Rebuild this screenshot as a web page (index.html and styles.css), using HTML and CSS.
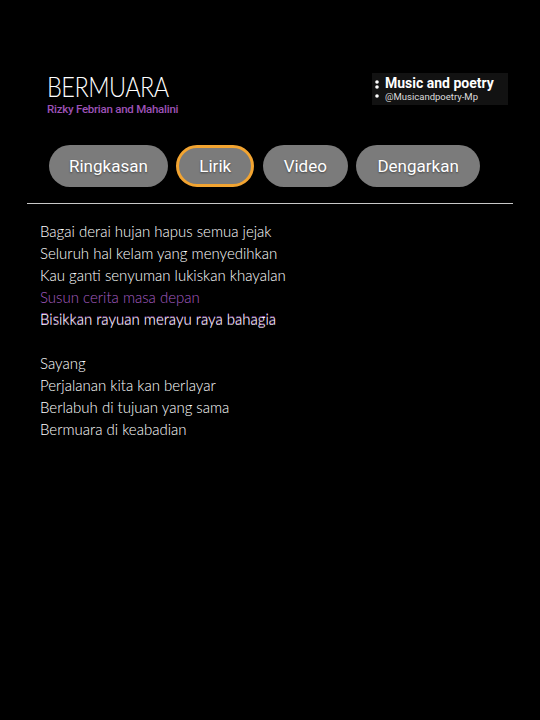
FILE: index.html
```html
<!DOCTYPE html>
<html>
<head>
<meta charset="utf-8">
<link rel="stylesheet" href="styles.css">
</head>
<body>
<div class="page">
  <div class="header">
    <div class="song">
      <div class="title">BERMUARA</div>
      <div class="artist">Rizky Febrian and Mahalini</div>
    </div>
    <div class="channel">
      <svg class="dots" width="6" height="20" viewBox="0 0 6 20">
        <circle cx="3" cy="2" r="1.8" fill="#fff"/>
        <circle cx="3" cy="7" r="1.8" fill="#fff"/>
        <circle cx="3" cy="16" r="1.8" fill="#fff"/>
      </svg>
      <div class="channel-text">
        <div class="channel-name">Music and poetry</div>
        <div class="channel-handle">@Musicandpoetry-Mp</div>
      </div>
    </div>
  </div>
  <div class="tabs">
    <div class="tab">Ringkasan</div>
    <div class="tab active">Lirik</div>
    <div class="tab">Video</div>
    <div class="tab">Dengarkan</div>
  </div>
  <div class="divider"></div>
  <div class="lyrics">
    <div class="line">Bagai derai hujan hapus semua jejak</div>
    <div class="line">Seluruh hal kelam yang menyedihkan</div>
    <div class="line">Kau ganti senyuman lukiskan khayalan</div>
    <div class="line current">Susun cerita masa depan</div>
    <div class="line next">Bisikkan rayuan merayu raya bahagia</div>
    <div class="line blank">&nbsp;</div>
    <div class="line">Sayang</div>
    <div class="line">Perjalanan kita kan berlayar</div>
    <div class="line">Berlabuh di tujuan yang sama</div>
    <div class="line">Bermuara di keabadian</div>
  </div>
</div>
</body>
</html>
```
FILE: styles.css
```css
html, body {
  margin: 0;
  padding: 0;
  background: #000;
}
.page {
  width: 540px;
  height: 720px;
  background: #000;
  color: #fff;
  font-family: Roboto, "Liberation Sans", sans-serif;
}
.header {
  display: flex;
  justify-content: space-between;
  align-items: flex-start;
  padding: 72px 32px 0 47px;
}
.title {
  font-family: Lato, "DejaVu Sans", sans-serif;
  font-weight: 300;
  font-size: 27px;
  line-height: 30px;
  letter-spacing: -0.6px;
  color: #fff;
  transform: scaleX(0.87);
  transform-origin: left center;
}
.artist {
  font-family: Roboto, sans-serif;
  font-weight: 500;
  font-size: 11.5px;
  line-height: 14px;
  letter-spacing: -0.25px;
  color: #9d52b6;
  margin-top: 0px;
}
.channel {
  display: flex;
  align-items: flex-start;
  background: #121212;
  width: 136px;
  height: 32px;
  box-sizing: border-box;
  padding: 7px 0 0 2px;
  margin-top: 1px;
}
.dots {
  margin-top: 0px;
  margin-right: 5px;
}
.channel-text {
  display: flex;
  flex-direction: column;
  margin-top: -5px;
}
.channel-name {
  font-weight: 700;
  font-size: 14px;
  line-height: 16px;
  color: #fff;
}
.channel-handle {
  font-size: 9.5px;
  line-height: 12px;
  color: #ddd;
}
.tabs {
  display: flex;
  gap: 8.5px;
  padding-left: 49px;
  margin-top: 29px;
}
.tab {
  height: 42px;
  box-sizing: border-box;
  padding: 0 21px;
  border-radius: 21px;
  background: #7b7b7b;
  color: #fff;
  font-size: 17px;
  display: flex;
  align-items: center;
  text-shadow: 0 1px 2px rgba(0,0,0,0.45);
}
.tab:first-child {
  padding: 0 20px;
}
.tab.active {
  border: 3px solid #f2a431;
  padding: 0 20px;
}
.divider {
  height: 1px;
  background: #c8c8c8;
  margin: 16px 27px 0 27px;
}
.lyrics {
  padding: 16px 0 0 40px;
  font-family: Lato, sans-serif;
  font-weight: 300;
  font-size: 15px;
  line-height: 22px;
  color: #fff;
}
.line.current {
  color: #a65cc2;
}
.line.next {
  color: #fff;
  text-shadow: 0 -1px 0 #8c4aa6;
}
```
